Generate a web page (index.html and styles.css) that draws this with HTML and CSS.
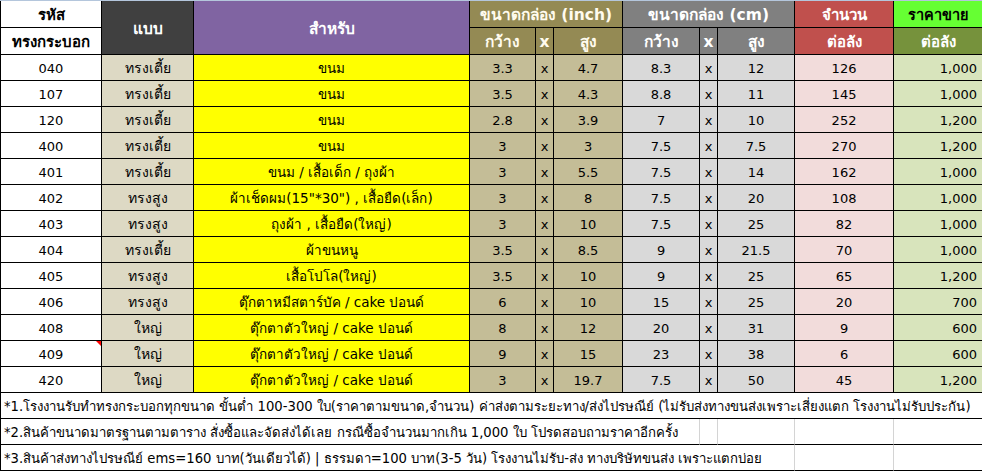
FILE: index.html
```html
<!DOCTYPE html>
<html lang="th">
<head>
<meta charset="utf-8">
<title>ทรงกระบอก</title>
<link rel="stylesheet" href="styles.css">
</head>
<body>
<div class="sheet">
<table class="grid">
  <colgroup>
    <col class="w-a"><col class="w-b"><col class="w-c"><col class="w-d"><col class="w-x"><col class="w-f">
    <col class="w-g"><col class="w-x"><col class="w-i"><col class="w-j"><col class="w-k">
  </colgroup>
  <thead>
    <tr class="h1">
      <th class="hd-code">รหัส</th>
      <th class="hd-type big" rowspan="2">แบบ</th>
      <th class="hd-use big" rowspan="2">สำหรับ</th>
      <th class="hd-in big" colspan="3">ขนาดกล่อง (inch)</th>
      <th class="hd-cm big" colspan="3">ขนาดกล่อง (cm)</th>
      <th class="hd-qty">จำนวน</th>
      <th class="hd-price1">ราคาขาย</th>
    </tr>
    <tr class="h2">
      <th class="hd-code">ทรงกระบอก</th>
      <th class="hd-in big">กว้าง</th>
      <th class="hd-in big">x</th>
      <th class="hd-in big">สูง</th>
      <th class="hd-cm big">กว้าง</th>
      <th class="hd-cm big">x</th>
      <th class="hd-cm big">สูง</th>
      <th class="hd-qty">ต่อลัง</th>
      <th class="hd-price2">ต่อลัง</th>
    </tr>
  </thead>
  <tbody>
    <tr><td class="c-code">040</td><td class="c-type">ทรงเตี้ย</td><td class="c-use">ขนม</td><td class="c-in">3.3</td><td class="c-in">x</td><td class="c-in">4.7</td><td class="c-cm">8.3</td><td class="c-cm">x</td><td class="c-cm">12</td><td class="c-qty">126</td><td class="c-price">1,000</td></tr>
    <tr><td class="c-code">107</td><td class="c-type">ทรงเตี้ย</td><td class="c-use">ขนม</td><td class="c-in">3.5</td><td class="c-in">x</td><td class="c-in">4.3</td><td class="c-cm">8.8</td><td class="c-cm">x</td><td class="c-cm">11</td><td class="c-qty">145</td><td class="c-price">1,000</td></tr>
    <tr><td class="c-code">120</td><td class="c-type">ทรงเตี้ย</td><td class="c-use">ขนม</td><td class="c-in">2.8</td><td class="c-in">x</td><td class="c-in">3.9</td><td class="c-cm">7</td><td class="c-cm">x</td><td class="c-cm">10</td><td class="c-qty">252</td><td class="c-price">1,200</td></tr>
    <tr><td class="c-code">400</td><td class="c-type">ทรงเตี้ย</td><td class="c-use">ขนม</td><td class="c-in">3</td><td class="c-in">x</td><td class="c-in">3</td><td class="c-cm">7.5</td><td class="c-cm">x</td><td class="c-cm">7.5</td><td class="c-qty">270</td><td class="c-price">1,200</td></tr>
    <tr><td class="c-code">401</td><td class="c-type">ทรงเตี้ย</td><td class="c-use">ขนม / เสื้อเด็ก / ถุงผ้า</td><td class="c-in">3</td><td class="c-in">x</td><td class="c-in">5.5</td><td class="c-cm">7.5</td><td class="c-cm">x</td><td class="c-cm">14</td><td class="c-qty">162</td><td class="c-price">1,000</td></tr>
    <tr><td class="c-code">402</td><td class="c-type">ทรงสูง</td><td class="c-use">ผ้าเช็ดผม(15"*30") , เสื้อยืด(เล็ก)</td><td class="c-in">3</td><td class="c-in">x</td><td class="c-in">8</td><td class="c-cm">7.5</td><td class="c-cm">x</td><td class="c-cm">20</td><td class="c-qty">108</td><td class="c-price">1,000</td></tr>
    <tr><td class="c-code">403</td><td class="c-type">ทรงสูง</td><td class="c-use">ถุงผ้า , เสื้อยืด(ใหญ่)</td><td class="c-in">3</td><td class="c-in">x</td><td class="c-in">10</td><td class="c-cm">7.5</td><td class="c-cm">x</td><td class="c-cm">25</td><td class="c-qty">82</td><td class="c-price">1,000</td></tr>
    <tr><td class="c-code">404</td><td class="c-type">ทรงเตี้ย</td><td class="c-use">ผ้าขนหนู</td><td class="c-in">3.5</td><td class="c-in">x</td><td class="c-in">8.5</td><td class="c-cm">9</td><td class="c-cm">x</td><td class="c-cm">21.5</td><td class="c-qty">70</td><td class="c-price">1,000</td></tr>
    <tr><td class="c-code">405</td><td class="c-type">ทรงสูง</td><td class="c-use">เสื้อโปโล(ใหญ่)</td><td class="c-in">3.5</td><td class="c-in">x</td><td class="c-in">10</td><td class="c-cm">9</td><td class="c-cm">x</td><td class="c-cm">25</td><td class="c-qty">65</td><td class="c-price">1,200</td></tr>
    <tr><td class="c-code">406</td><td class="c-type">ทรงสูง</td><td class="c-use">ตุ๊กตาหมีสตาร์บัค / cake ปอนด์</td><td class="c-in">6</td><td class="c-in">x</td><td class="c-in">10</td><td class="c-cm">15</td><td class="c-cm">x</td><td class="c-cm">25</td><td class="c-qty">20</td><td class="c-price">700</td></tr>
    <tr><td class="c-code">408</td><td class="c-type">ใหญ่</td><td class="c-use">ตุ๊กตาตัวใหญ่ / cake ปอนด์</td><td class="c-in">8</td><td class="c-in">x</td><td class="c-in">12</td><td class="c-cm">20</td><td class="c-cm">x</td><td class="c-cm">31</td><td class="c-qty">9</td><td class="c-price">600</td></tr>
    <tr><td class="c-code has-note">409<span class="note-mark"></span></td><td class="c-type">ใหญ่</td><td class="c-use">ตุ๊กตาตัวใหญ่ / cake ปอนด์</td><td class="c-in">9</td><td class="c-in">x</td><td class="c-in">15</td><td class="c-cm">23</td><td class="c-cm">x</td><td class="c-cm">38</td><td class="c-qty">6</td><td class="c-price">600</td></tr>
    <tr><td class="c-code">420</td><td class="c-type">ใหญ่</td><td class="c-use">ตุ๊กตาตัวใหญ่ / cake ปอนด์</td><td class="c-in">3</td><td class="c-in">x</td><td class="c-in">19.7</td><td class="c-cm">7.5</td><td class="c-cm">x</td><td class="c-cm">50</td><td class="c-qty">45</td><td class="c-price">1,200</td></tr>
  </tbody>
  <tfoot>
    <tr class="note-row"><td class="note note-end" colspan="11">*1.โรงงานรับทำทรงกระบอกทุกขนาด ขั้นต่ำ 100-300 ใบ(ราคาตามขนาด,จำนวน) ค่าส่งตามระยะทาง/ส่งไปรษณีย์ (ไม่รับส่งทางขนส่งเพราะเสี่ยงแตก โรงงานไม่รับประกัน)</td></tr>
    <tr class="note-row"><td class="note" colspan="7">*2.สินค้าขนาดมาตรฐานตามตาราง สั่งซื้อและจัดส่งได้เลย กรณีซื้อจำนวนมากเกิน 1,000 ใบ โปรดสอบถามราคาอีกครั้ง</td><td class="blank"></td><td class="blank"></td><td class="blank"></td><td class="blank note-end"></td></tr>
    <tr class="note-row"><td class="note" colspan="9">*3.สินค้าส่งทางไปรษณีย์ ems=160 บาท(วันเดียวได้) | ธรรมดา=100 บาท(3-5 วัน) โรงงานไม่รับ-ส่ง ทางบริษัทขนส่ง เพราะแตกบ่อย</td><td class="blank"></td><td class="blank note-end"></td></tr>
  </tfoot>
</table>
</div>
</body>
</html>
```

FILE: styles.css
```css
html, body {
  margin: 0;
  padding: 0;
  background: #ffffff;
}

.sheet {
  width: 982px;
  border-top: 1px solid #b4c6dc;
}

.grid {
  width: 982px;
  table-layout: fixed;
  border-collapse: separate;
  border-spacing: 0;
  font-family: "DejaVu Sans", sans-serif;
  font-size: 13px;
  color: #000;
  border-left: 1px solid #000;
}

.w-a { width: 101px; }
.w-b { width: 92px; }
.w-c { width: 276px; }
.w-d { width: 66px; }
.w-x { width: 18px; }
.w-f { width: 69px; }
.w-g { width: 77px; }
.w-i { width: 77px; }
.w-j { width: 99px; }
.w-k { width: 89px; }

.grid th,
.grid td {
  box-sizing: border-box;
  padding: 1px 2px 0;
  border-right: 1px solid #000;
  border-bottom: 1px solid #000;
  text-align: center;
  vertical-align: middle;
  white-space: nowrap;
  overflow: hidden;
}

.grid th:first-child,
.grid td:first-child {
  border-left: 0;
}

.h1 th { height: 25px; }
.h2 th { height: 27px; }
.grid tbody td { height: 26px; }
.note-row td { height: 26px; }

.grid th {
  font-weight: bold;
  font-size: 15px;
  color: #fff;
}

.grid th.big { font-size: 15.5px; }

.hd-code { background: #fff; color: #000 !important; }
.hd-type { background: #404040; }
.hd-use { background: #8064a2; }
.hd-in { background: #948a54; color: #fffbee !important; }
.hd-cm { background: #808080; }
.hd-qty { background: #c0504d; }
.hd-price1 { background: #66ff33; color: #000 !important; font-size: 14.5px !important; }
.hd-price2 { background: #76923c; }

.c-code { background: #fff; }
.c-type { background: #ddd9c4; font-size: 14px; }
.c-use { background: #ffff00; font-size: 13.5px; }
.c-in { background: #c4bd97; }
.c-cm { background: #d9d9d9; }
.c-qty { background: #f2dcdb; }
.c-price { background: #d8e4bc; text-align: right !important; padding-right: 5px !important; }

.has-note { position: relative; }
.note-mark {
  position: absolute;
  top: 0;
  right: 0;
  width: 0;
  height: 0;
  border-top: 5px solid #ff0000;
  border-left: 5px solid transparent;
}

.note-row td {
  background: #fff;
}

.grid td.note {
  text-align: left;
  padding: 1px 0 0 3px;
  font-size: 13.2px;
  border-right-color: #d4d4d4;
  overflow: visible;
}

.grid td.blank {
  border-right-color: #d4d4d4;
}

.grid td.note-end {
  border-right-color: #000;
}
```
